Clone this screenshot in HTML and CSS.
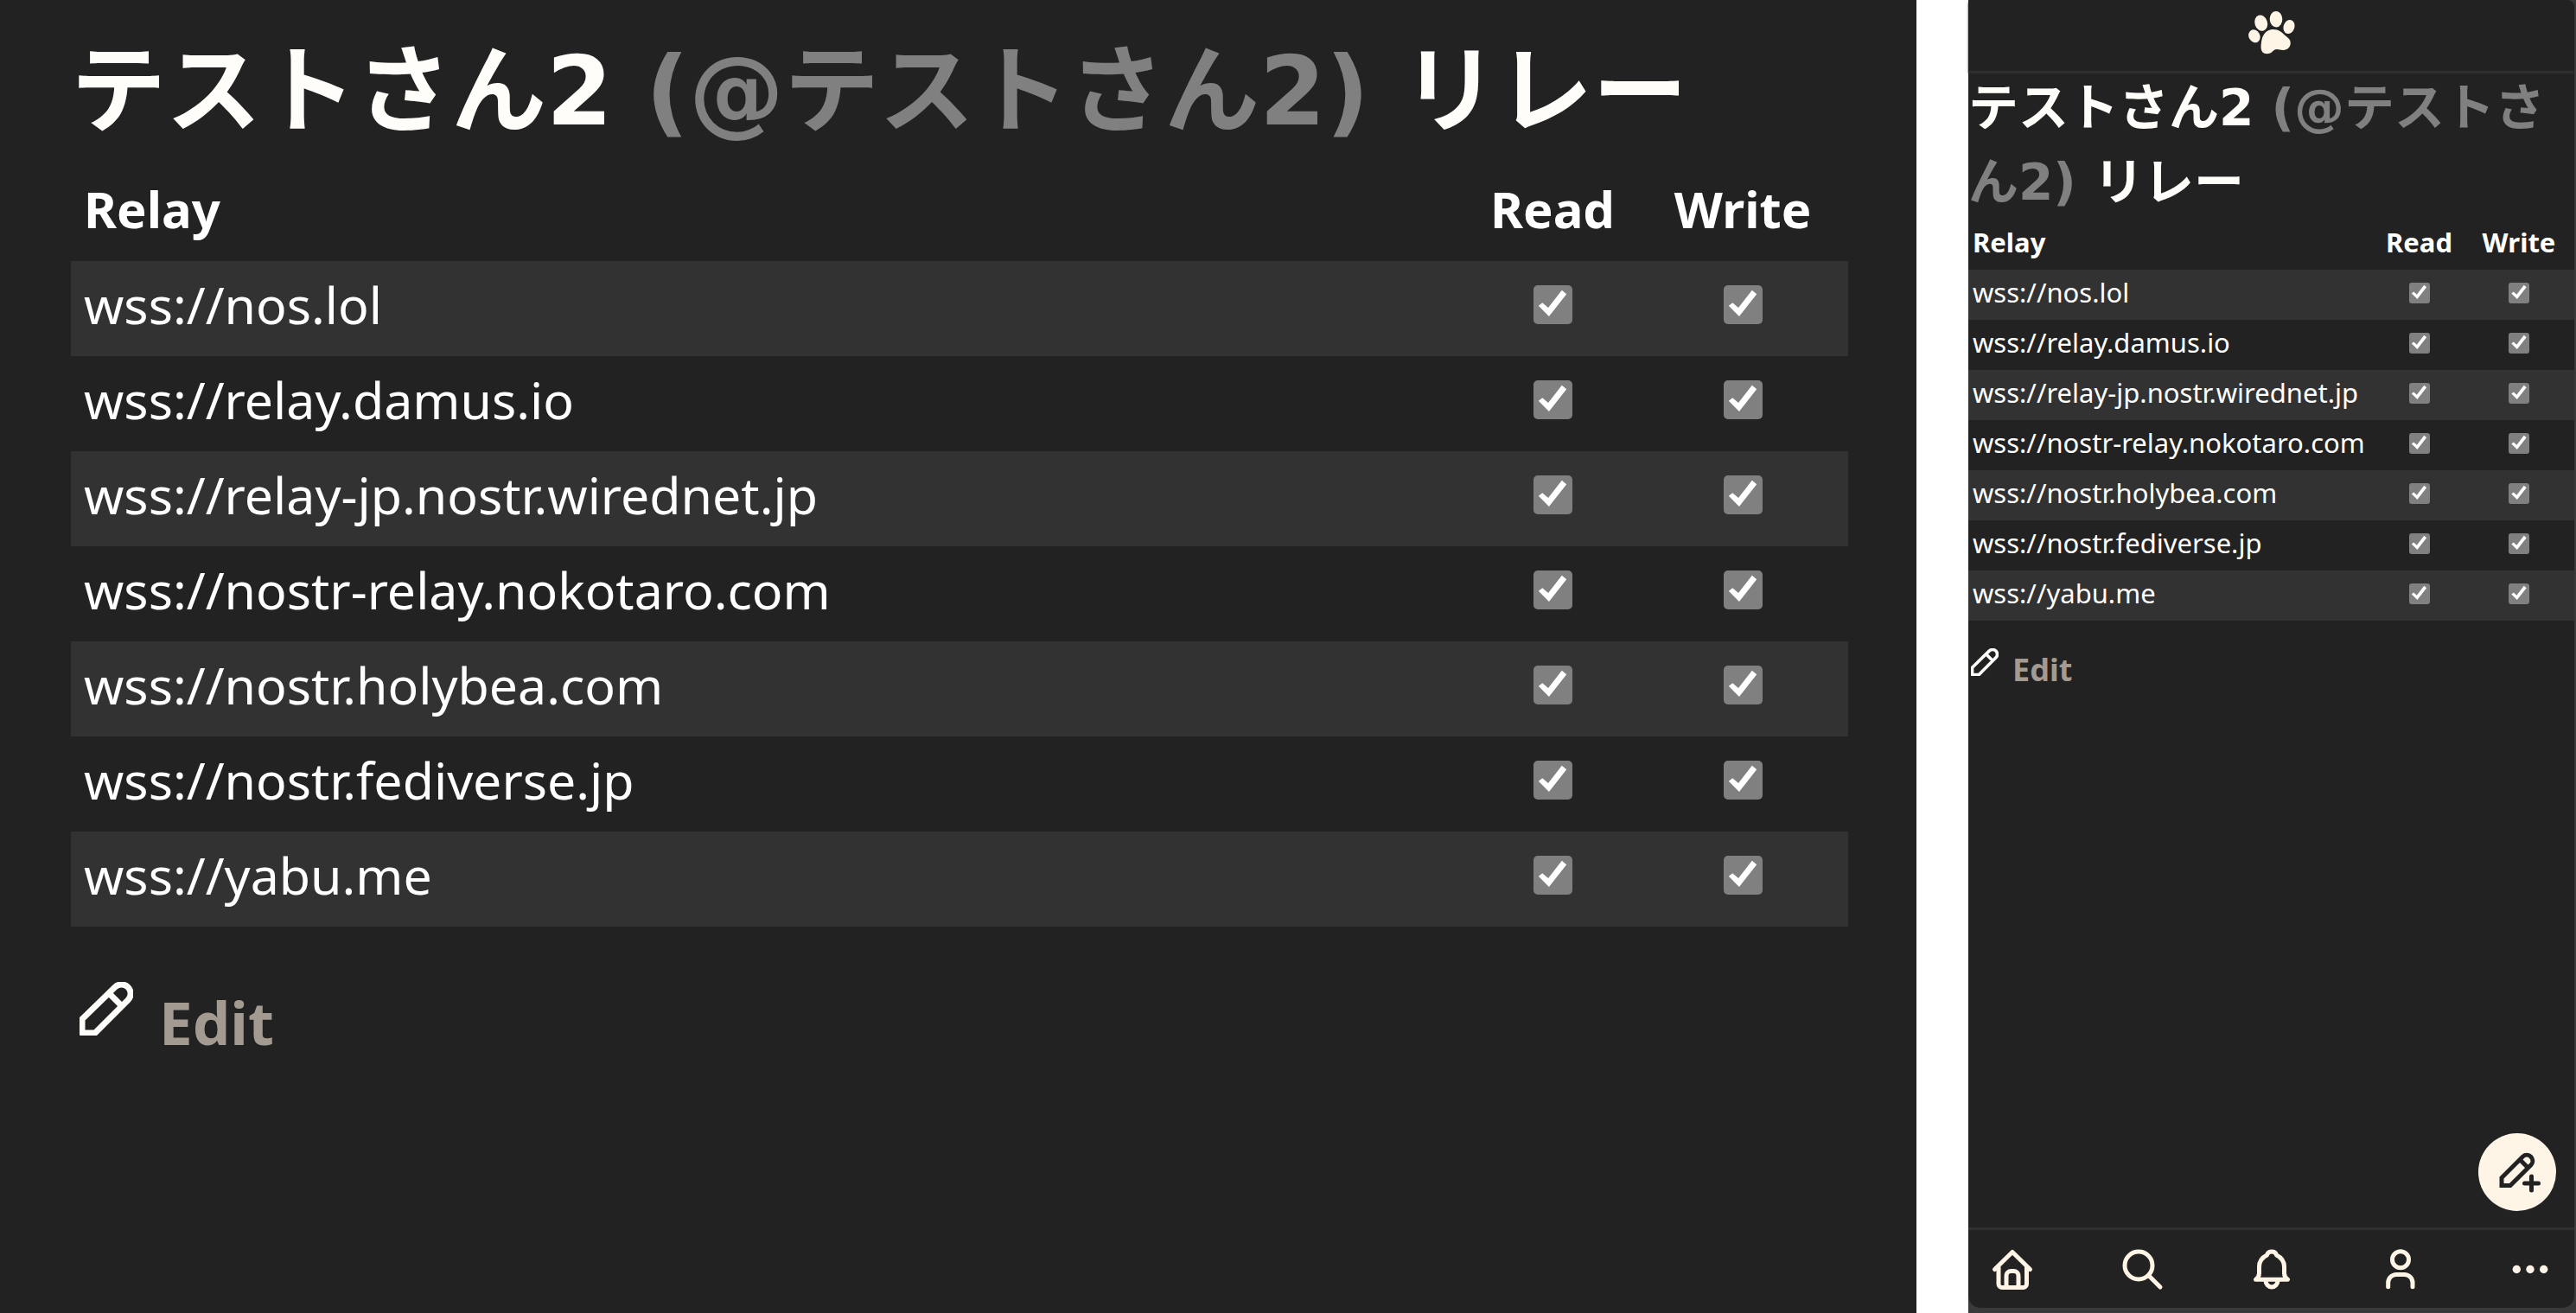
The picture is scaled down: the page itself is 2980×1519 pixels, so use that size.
FILE: index.html
```html
<!DOCTYPE html>
<html lang="ja">
<head>
<meta charset="utf-8">
<title>テストさん2 リレー</title>
<link rel="stylesheet" href="styles.css">
</head>
<body>
<div class="views">
  <main class="panel wide">
    <h1 class="title">テストさん2 <span class="handle">(@テストさん2)</span> リレー</h1>
    <table class="relays">
      <thead>
        <tr><th class="relay">Relay</th><th class="read">Read</th><th class="write">Write</th></tr>
      </thead>
      <tbody>
        <tr><td>wss://nos.lol</td><td><input type="checkbox" aria-label="Read" checked></td><td><input type="checkbox" aria-label="Write" checked></td></tr>
        <tr><td>wss://relay.damus.io</td><td><input type="checkbox" aria-label="Read" checked></td><td><input type="checkbox" aria-label="Write" checked></td></tr>
        <tr><td>wss://relay-jp.nostr.wirednet.jp</td><td><input type="checkbox" aria-label="Read" checked></td><td><input type="checkbox" aria-label="Write" checked></td></tr>
        <tr><td>wss://nostr-relay.nokotaro.com</td><td><input type="checkbox" aria-label="Read" checked></td><td><input type="checkbox" aria-label="Write" checked></td></tr>
        <tr><td>wss://nostr.holybea.com</td><td><input type="checkbox" aria-label="Read" checked></td><td><input type="checkbox" aria-label="Write" checked></td></tr>
        <tr><td>wss://nostr.fediverse.jp</td><td><input type="checkbox" aria-label="Read" checked></td><td><input type="checkbox" aria-label="Write" checked></td></tr>
        <tr><td>wss://yabu.me</td><td><input type="checkbox" aria-label="Read" checked></td><td><input type="checkbox" aria-label="Write" checked></td></tr>
      </tbody>
    </table>
    <a class="edit" href="#edit">
      <svg class="pencil" viewBox="0 0 62 62" aria-hidden="true"><path d="M3 59V43L41 6a10.6 10.6 0 0 1 15 15L18 59ZM34 13l15 15"/></svg>
      <span>Edit</span>
    </a>
  </main>

  <div class="device">
    <div class="panel phone">
      <header class="topbar">
        <a class="logo" href="#home" aria-label="Top">
          <svg viewBox="0 0 54 51" aria-hidden="true">
            <ellipse cx="6.9" cy="29.8" rx="6.4" ry="7.8" transform="rotate(-28 6.9 29.8)"/>
            <ellipse cx="14.7" cy="14.7" rx="7.3" ry="9.3" transform="rotate(-18 14.7 14.7)"/>
            <ellipse cx="32" cy="10.2" rx="7.3" ry="9.3" transform="rotate(-3 32 10.2)"/>
            <ellipse cx="47" cy="19" rx="6.3" ry="8.2" transform="rotate(18 47 19)"/>
            <path d="M28.5 22C21.500 22 17 27 15.500 34C14.500 39 14 44 15.500 47C17 50 21 51 24.500 49.800C28 48.500 28.500 45.800 31.700 45.200C35 44.700 38 46.500 42 45.800C46.500 45 49 41.500 48.700 37C48.400 33 45.500 31.800 42.500 29C39 25.500 35.500 22 28.500 22Z"/>
          </svg>
        </a>
      </header>
      <section class="content">
        <h2 class="title">テストさん2 <span class="handle">(@テストさん2)</span> リレー</h2>
        <table class="relays">
          <thead>
            <tr><th class="relay">Relay</th><th class="read">Read</th><th class="write">Write</th></tr>
          </thead>
          <tbody>
            <tr><td>wss://nos.lol</td><td><input type="checkbox" aria-label="Read" checked></td><td><input type="checkbox" aria-label="Write" checked></td></tr>
            <tr><td>wss://relay.damus.io</td><td><input type="checkbox" aria-label="Read" checked></td><td><input type="checkbox" aria-label="Write" checked></td></tr>
            <tr><td>wss://relay-jp.nostr.wirednet.jp</td><td><input type="checkbox" aria-label="Read" checked></td><td><input type="checkbox" aria-label="Write" checked></td></tr>
            <tr><td>wss://nostr-relay.nokotaro.com</td><td><input type="checkbox" aria-label="Read" checked></td><td><input type="checkbox" aria-label="Write" checked></td></tr>
            <tr><td>wss://nostr.holybea.com</td><td><input type="checkbox" aria-label="Read" checked></td><td><input type="checkbox" aria-label="Write" checked></td></tr>
            <tr><td>wss://nostr.fediverse.jp</td><td><input type="checkbox" aria-label="Read" checked></td><td><input type="checkbox" aria-label="Write" checked></td></tr>
            <tr><td>wss://yabu.me</td><td><input type="checkbox" aria-label="Read" checked></td><td><input type="checkbox" aria-label="Write" checked></td></tr>
          </tbody>
        </table>
        <a class="edit" href="#edit">
          <svg class="pencil" viewBox="0 0 62 62" aria-hidden="true"><path d="M3 59V43L41 6a10.6 10.6 0 0 1 15 15L18 59ZM34 13l15 15"/></svg>
          <span>Edit</span>
        </a>
        <button class="compose" type="button" aria-label="New post">
          <svg viewBox="0 0 90 90" aria-hidden="true"><path d="M27 60.500V51.500L51.500 27a6.800 6.800 0 0 1 9.600 9.600L37 60.500ZM48.500 31l9 9M53.500 58h16M61.500 50v16"/></svg>
        </button>
      </section>
      <nav class="tabs">
        <a href="#home" aria-label="Home"><svg viewBox="0 0 54 54" aria-hidden="true"><path d="M6.500 27.500L27 7.500L47.500 27.500M11 24.500V44.500a4 4 0 0 0 4 4H39.500a4 4 0 0 0 4-4V24.500M20 48V35a5.500 5.500 0 0 1 5.500-5.500H28.500A5.500 5.500 0 0 1 34 35V48"/></svg></a>
        <a href="#search" aria-label="Search"><svg viewBox="0 0 54 54" aria-hidden="true"><circle cx="23" cy="23" r="16"/><path d="M34.500 34.500L48 48"/></svg></a>
        <a href="#notifications" aria-label="Notifications"><svg viewBox="0 0 54 54" aria-hidden="true"><path d="M21.500 11C22.300 7.800 24 7 27 7S31.700 7.800 32.500 11C38.500 14 41.500 18.500 41.500 24.500V32C41.500 35 42.500 37 45.500 39.200H8.500C11.500 37 12.500 35 12.500 32V24.500C12.500 18.500 15.500 14 21.500 11ZM20 40.500a7 7.500 0 0 0 14 0"/></svg></a>
        <a href="#profile" aria-label="Profile"><svg viewBox="0 0 54 54" aria-hidden="true"><circle cx="27" cy="16.300" r="9.500"/><path d="M12.700 47.800V43a9.500 9.500 0 0 1 9.500-9.500H31.500a9.500 9.500 0 0 1 9.500 9.500V47.800"/></svg></a>
        <a href="#more" aria-label="More"><svg class="dots" viewBox="0 0 54 54" aria-hidden="true"><circle cx="11.300" cy="27.500" r="4.700"/><circle cx="27" cy="27.500" r="4.700"/><circle cx="42.700" cy="27.500" r="4.700"/></svg></a>
      </nav>
    </div>
  </div>
</div>
</body>
</html>
```
FILE: styles.css
```css
* {
  box-sizing: border-box;
}

body {
  margin: 0;
  background: #fff;
  color: #fff;
  font-family: "Noto Sans", "Noto Sans CJK JP", sans-serif;
}

.views {
  display: grid;
  grid-template-columns: 2217fr 703fr;
  gap: 60px;
  min-height: 100vh;
}

.panel {
  background: #222;
}

.wide {
  padding: 21px 79px 40px 82px;
}

.title {
  margin: 0;
  color: #fffdf9;
  font-family: "DejaVu Sans", "Noto Sans CJK JP", sans-serif;
  font-size: 110px;
  font-weight: 700;
  line-height: 171px;
}

.handle {
  color: #808080;
}

.relays {
  width: 100%;
  border-collapse: collapse;
  table-layout: fixed;
  font-size: 59px;
  line-height: 100px;
}

.relays th,
.relays td {
  padding: 0 0 10px;
  text-align: center;
  white-space: nowrap;
}

.relays th {
  font-size: 58px;
}

.relays th:first-child,
.relays td:first-child {
  padding-left: 15px;
  text-align: left;
}

.read {
  width: 196px;
}

.write {
  width: 244px;
}

.relays tbody tr:nth-child(odd) {
  background: #323232;
}

.relays input {
  display: block;
  width: 45px;
  height: 45px;
  margin: 0 auto;
  appearance: none;
  border-radius: 5px;
  background: #808080;
}

.relays input:checked::before {
  content: "";
  display: block;
  width: 100%;
  height: 100%;
  background: #fff;
  clip-path: polygon(14% 54%, 24% 46%, 39% 59%, 74% 14%, 86% 24%, 41% 81%);
}

.edit {
  display: flex;
  align-items: flex-start;
  gap: 30px;
  width: fit-content;
  margin-top: 64px;
  padding-left: 10px;
  color: #a39b91;
  font-size: 69px;
  font-weight: 700;
  line-height: 93px;
  text-decoration: none;
}

.pencil {
  width: 62px;
  height: 62px;
  fill: none;
  stroke: #fffdf9;
  stroke-width: 7;
  stroke-linejoin: round;
}

.device {
  display: flex;
  padding: 0 2px 6px 0;
  background: #3a3a3a;
}

.phone {
  display: flex;
  flex: 1;
  flex-direction: column;
  min-width: 0;
  border-radius: 0 8px 14px 14px;
}

.topbar {
  display: flex;
  justify-content: center;
  height: 82px;
  padding-top: 12px;
  box-shadow: 0 3px 2px #303030;
}

.logo svg {
  display: block;
  width: 54px;
  height: 51px;
  fill: #fef5e7;
}

.content {
  position: relative;
  flex: 1;
}

.phone .title {
  font-size: 58px;
  line-height: 86px;
}

.phone .relays {
  font-size: 31px;
  line-height: 53px;
}

.phone .relays th,
.phone .relays td {
  padding-bottom: 5px;
}

.phone .relays th {
  font-size: 31px;
}

.phone .relays th:first-child,
.phone .relays td:first-child {
  padding-left: 5px;
}

.phone .read {
  width: 103px;
}

.phone .write {
  width: 128px;
}

.phone .relays input {
  width: 24px;
  height: 24px;
  border-radius: 3px;
}

.phone .edit {
  gap: 16px;
  margin-top: 32px;
  padding-left: 3px;
  font-size: 36px;
  line-height: 49px;
}

.phone .pencil {
  width: 32px;
  height: 32px;
}

.compose {
  position: absolute;
  right: 21px;
  bottom: 19px;
  width: 90px;
  height: 90px;
  padding: 0;
  border: 0;
  border-radius: 50%;
  background: #fef5e7;
}

.compose svg {
  display: block;
  fill: none;
  stroke: #222;
  stroke-width: 5;
  stroke-linecap: round;
}

.tabs {
  display: flex;
  align-items: center;
  justify-content: space-between;
  height: 93px;
  padding: 0 24px;
  border-top: 3px solid #303030;
}

.tabs svg {
  display: block;
  width: 54px;
  height: 54px;
  fill: none;
  stroke: #fef5e7;
  stroke-width: 5;
  stroke-linecap: round;
  stroke-linejoin: round;
}

.tabs .dots {
  fill: #fef5e7;
  stroke: none;
}
```
